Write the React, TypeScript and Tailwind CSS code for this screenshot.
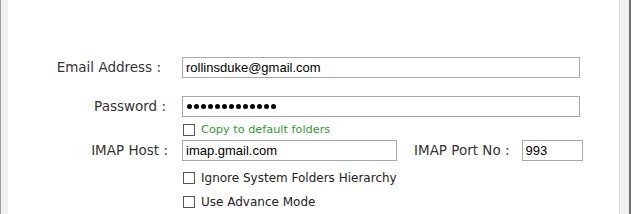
export default function App() {
  const label = "text-[13.5px] text-[#333333] text-right shrink-0";
  const input =
    "h-[21px] border border-[#a9a9a9] bg-white px-[3px] text-[13px] text-black leading-[19px] outline-none font-['Liberation_Sans',Arial,sans-serif]";
  const check = "w-[12px] h-[12px] border border-[#555555] bg-white shrink-0";

  return (
    <div className="w-[631px] h-[214px] flex bg-white overflow-hidden" style={{ fontFamily: '"DejaVu Sans", Verdana, sans-serif' }}>
      <div className="w-[8px] shrink-0 bg-[#f0f0f0] border-l border-[#9a9a9a]" />
      <div className="flex-1 pt-[57px]">
        {/* email */}
        <div className="flex items-center">
          <div className={`${label} w-[153px]`}>Email Address :</div>
          <input className={`${input} ml-[21px] w-[398px]`} defaultValue="rollinsduke@gmail.com" />
        </div>
        {/* password */}
        <div className="flex items-center mt-[18px]">
          <div className={`${label} w-[158px]`}>Password :</div>
          <div className={`${input} ml-[16px] w-[398px] flex items-center gap-[2px] px-[4px]`}>
            {Array.from({ length: 13 }).map((_, i) => (
              <span key={i} className="w-[5px] h-[5px] rounded-full bg-black" />
            ))}
          </div>
        </div>
        <div className="flex items-center mt-[5px] ml-[175px] gap-[6px]">
          <div className={check} />
          <span className="text-[11.3px] text-[#339933]">Copy to default folders</span>
        </div>
        {/* imap */}
        <div className="flex items-center mt-[1px]">
          <div className={`${label} w-[160px]`}>IMAP Host :</div>
          <input className={`${input} ml-[14px] w-[215px]`} defaultValue="imap.gmail.com" />
          <div className={`${label} ml-[17px]`}>IMAP Port No :</div>
          <input className={`${input} ml-[12px] w-[61px]`} defaultValue="993" />
        </div>
        <div className="flex items-center mt-[8px] ml-[175px] gap-[6px]">
          <div className={check} />
          <span className="text-[12px] text-[#222222]">Ignore System Folders Hierarchy</span>
        </div>
        <div className="flex items-center mt-[6px] ml-[175px] gap-[6px]">
          <div className={check} />
          <span className="text-[12px] text-[#222222]">Use Advance Mode</span>
        </div>
      </div>
      <div className="w-[12px] shrink-0 bg-[#f0f0f0] border-l border-[#dcdcdc] border-r-[2px] border-r-[#6e6e6e]" />
    </div>
  );
}
